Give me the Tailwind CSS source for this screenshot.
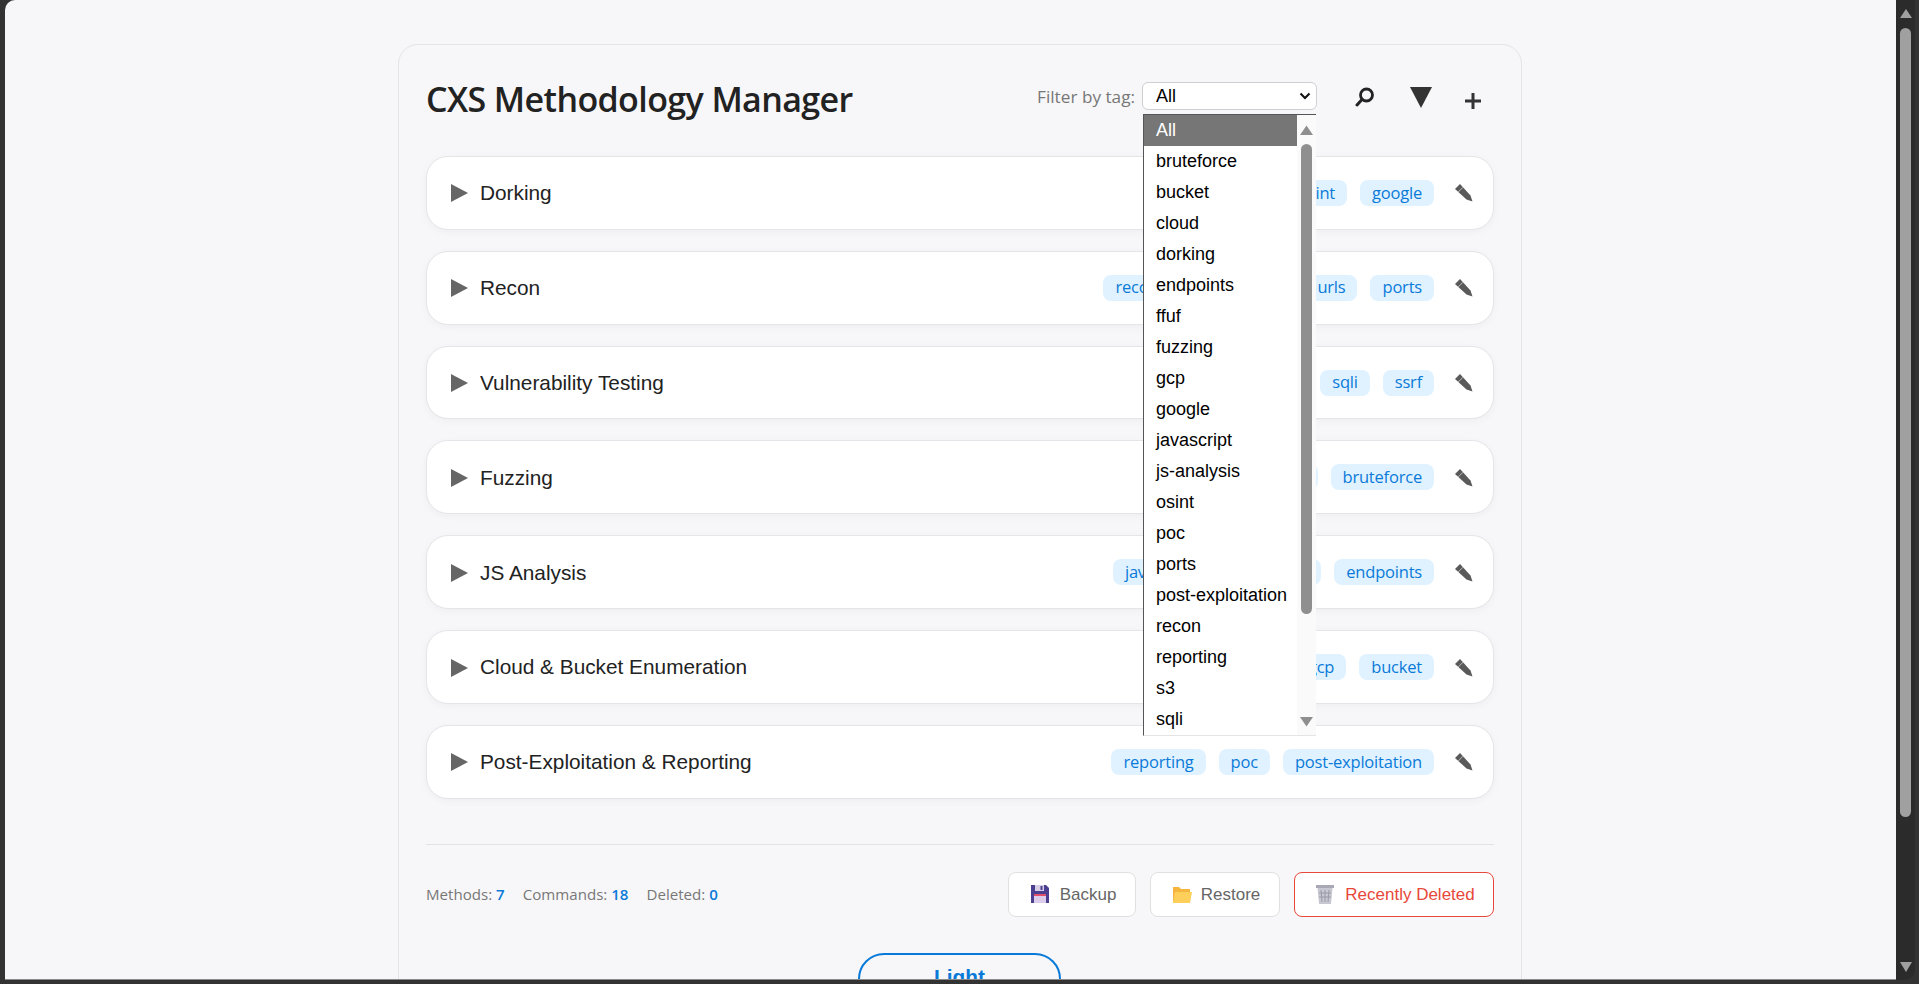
<!DOCTYPE html>
<html lang="en">
<head>
    <meta charset="UTF-8">
    <meta name="viewport" content="width=device-width, initial-scale=1.0">
    <title>CXS Methodology Manager</title>
    <script src="https://cdn.jsdelivr.net/npm/@tailwindcss/browser@4"></script>
</head>
<body class="bg-[#333333] h-screen overflow-hidden flex font-['Liberation_Sans',sans-serif]">

<!-- Page area -->
<div class="ml-[5px] w-[1891px] h-[980px] rounded-tl-[10px] bg-[#f7f7f9] overflow-hidden border-b border-[#8a8a8a]">
    <div class="ml-[393px] mt-[44px] w-[1124px] h-[1100px] bg-[#f7f7f9] border border-[#e2e4e8] rounded-[20px] px-[27px] pt-[28px]">

        <!-- Header -->
        <div class="flex items-center justify-between h-[50px] mb-[33px]">
            <h1 class="font-['Open_Sans',sans-serif] font-semibold text-[34px] tracking-[-0.6px] text-[#222222] mt-[2px]">CXS Methodology Manager</h1>
            <div class="flex items-start h-[50px] mr-[12px]">
                <span class="font-['Open_Sans',sans-serif] text-[#777777] text-[17.2px] mr-[7px] mt-[11px]">Filter by tag:</span>
                <div class="relative mt-[9px]">
                    <div class="w-[175px] h-[28px] bg-white border border-[#cfcfcf] rounded-[6px] flex items-center justify-between pl-[13px] pr-[5px] text-[18px] text-black">
                        <span>All</span>
                        <svg width="12" height="8" viewBox="0 0 12 8"><path d="M1.5 1.5 6 6l4.5-4.5" fill="none" stroke="#111" stroke-width="2"/></svg>
                    </div>

                    <!-- Open dropdown -->
                    <div class="absolute z-10 left-[1px] top-[32px] w-[173px] h-[622px] bg-white border-l border-t border-b border-l-[#555555] border-t-[#555555] border-b-[#e4e4e4] flex text-[18px] text-black overflow-hidden">
                        <div class="w-[153px]">
                            <div class="h-[31px] flex items-center pl-[12px] bg-[#767676] text-white">All</div>
                            <div class="h-[31px] flex items-center pl-[12px]">bruteforce</div>
                            <div class="h-[31px] flex items-center pl-[12px]">bucket</div>
                            <div class="h-[31px] flex items-center pl-[12px]">cloud</div>
                            <div class="h-[31px] flex items-center pl-[12px]">dorking</div>
                            <div class="h-[31px] flex items-center pl-[12px]">endpoints</div>
                            <div class="h-[31px] flex items-center pl-[12px]">ffuf</div>
                            <div class="h-[31px] flex items-center pl-[12px]">fuzzing</div>
                            <div class="h-[31px] flex items-center pl-[12px]">gcp</div>
                            <div class="h-[31px] flex items-center pl-[12px]">google</div>
                            <div class="h-[31px] flex items-center pl-[12px]">javascript</div>
                            <div class="h-[31px] flex items-center pl-[12px]">js-analysis</div>
                            <div class="h-[31px] flex items-center pl-[12px]">osint</div>
                            <div class="h-[31px] flex items-center pl-[12px]">poc</div>
                            <div class="h-[31px] flex items-center pl-[12px]">ports</div>
                            <div class="h-[31px] flex items-center pl-[12px]">post-exploitation</div>
                            <div class="h-[31px] flex items-center pl-[12px]">recon</div>
                            <div class="h-[31px] flex items-center pl-[12px]">reporting</div>
                            <div class="h-[31px] flex items-center pl-[12px]">s3</div>
                            <div class="h-[31px] flex items-center pl-[12px]">sqli</div>
                        </div>
                        <!-- Dropdown scrollbar -->
                        <div class="relative w-[19px] bg-[#fafafa]">
                            <svg class="absolute left-[3px] top-[10px]" width="13" height="10" viewBox="0 0 13 10"><path d="M6.5 0.5 13 10H0z" fill="#8f8f8f"/></svg>
                            <div class="absolute left-[4px] top-[29px] w-[11px] h-[470px] rounded-full bg-[#8f8f8f]"></div>
                            <svg class="absolute left-[3px] top-[602px]" width="13" height="10" viewBox="0 0 13 10"><path d="M0 0h13L6.5 9.5z" fill="#8f8f8f"/></svg>
                        </div>
                    </div>
                </div>

                <!-- Toolbar icons -->
                <button class="ml-[38px] mt-[14px]">
                    <svg width="20" height="20" viewBox="0 0 20 20"><circle cx="11.5" cy="8" r="6" fill="none" stroke="#222" stroke-width="2.8"/><path d="M7 12.5 2 18" stroke="#222" stroke-width="3" stroke-linecap="round"/></svg>
                </button>
                <button class="ml-[34px] mt-[14px]">
                    <svg width="24" height="21" viewBox="0 0 24 21"><path d="M1 0h22L12 21z" fill="#333333"/></svg>
                </button>
                <button class="ml-[31px] mt-[19px]">
                    <svg width="18" height="18" viewBox="0 0 18 18"><path d="M9 1v16M1 9h16" stroke="#333" stroke-width="3"/></svg>
                </button>
            </div>
        </div>

        <!-- Methods -->
        <div class="flex flex-col gap-[21px]">
            <div class="h-[73.84px] bg-white border border-[#e4e5e8] rounded-[22px] shadow-[0_2px_8px_rgba(0,0,0,0.04)] flex items-center pl-[24px] pr-[20px]">
                <svg class="mt-[1px] mr-[1px]" width="17" height="18" viewBox="0 0 17 18"><path d="M0 0l17 9-17 9z" fill="#666666"/></svg>
                <span class="ml-[11px] text-[20.8px] text-[#222222] flex-1">Dorking</span>
                <div class="flex gap-[13px] font-['Open_Sans',sans-serif] text-[16.5px] text-[#0a7ad9] tracking-[-0.2px]">
                    <span class="h-[26px] px-[12px] rounded-[8px] bg-[#e0f2ff] flex items-center">dorking</span>
                    <span class="h-[26px] px-[12px] rounded-[8px] bg-[#e0f2ff] flex items-center">osint</span>
                    <span class="h-[26px] px-[12px] rounded-[8px] bg-[#e0f2ff] flex items-center">google</span>
                </div>
                <svg class="ml-[21px] mt-[1px]" width="18" height="18" viewBox="0 0 18 18"><path d="M0 5 5 0l10.5 11.5 2 6-6-2z" fill="#5a5a5a"/><path d="M3.2 8 8 3.2" stroke="#bbbbbb" stroke-width="1"/></svg>
            </div>
            <div class="h-[73.84px] bg-white border border-[#e4e5e8] rounded-[22px] shadow-[0_2px_8px_rgba(0,0,0,0.04)] flex items-center pl-[24px] pr-[20px]">
                <svg class="mt-[1px] mr-[1px]" width="17" height="18" viewBox="0 0 17 18"><path d="M0 0l17 9-17 9z" fill="#666666"/></svg>
                <span class="ml-[11px] text-[20.8px] text-[#222222] flex-1">Recon</span>
                <div class="flex gap-[13px] font-['Open_Sans',sans-serif] text-[16.5px] text-[#0a7ad9] tracking-[-0.2px]">
                    <span class="h-[26px] px-[12px] rounded-[8px] bg-[#e0f2ff] flex items-center">recon</span>
                    <span class="h-[26px] px-[12px] rounded-[8px] bg-[#e0f2ff] flex items-center">subdomain</span>
                    <span class="h-[26px] px-[12px] rounded-[8px] bg-[#e0f2ff] flex items-center">urls</span>
                    <span class="h-[26px] px-[12px] rounded-[8px] bg-[#e0f2ff] flex items-center">ports</span>
                </div>
                <svg class="ml-[21px] mt-[1px]" width="18" height="18" viewBox="0 0 18 18"><path d="M0 5 5 0l10.5 11.5 2 6-6-2z" fill="#5a5a5a"/><path d="M3.2 8 8 3.2" stroke="#bbbbbb" stroke-width="1"/></svg>
            </div>
            <div class="h-[73.84px] bg-white border border-[#e4e5e8] rounded-[22px] shadow-[0_2px_8px_rgba(0,0,0,0.04)] flex items-center pl-[24px] pr-[20px]">
                <svg class="mt-[1px] mr-[1px]" width="17" height="18" viewBox="0 0 17 18"><path d="M0 0l17 9-17 9z" fill="#666666"/></svg>
                <span class="ml-[11px] text-[20.8px] text-[#222222] flex-1">Vulnerability Testing</span>
                <div class="flex gap-[13px] font-['Open_Sans',sans-serif] text-[16.5px] text-[#0a7ad9] tracking-[-0.2px]">
                    <span class="h-[26px] px-[12px] rounded-[8px] bg-[#e0f2ff] flex items-center">xss</span>
                    <span class="h-[26px] px-[12px] rounded-[8px] bg-[#e0f2ff] flex items-center">sqli</span>
                    <span class="h-[26px] px-[12px] rounded-[8px] bg-[#e0f2ff] flex items-center">ssrf</span>
                </div>
                <svg class="ml-[21px] mt-[1px]" width="18" height="18" viewBox="0 0 18 18"><path d="M0 5 5 0l10.5 11.5 2 6-6-2z" fill="#5a5a5a"/><path d="M3.2 8 8 3.2" stroke="#bbbbbb" stroke-width="1"/></svg>
            </div>
            <div class="h-[73.84px] bg-white border border-[#e4e5e8] rounded-[22px] shadow-[0_2px_8px_rgba(0,0,0,0.04)] flex items-center pl-[24px] pr-[20px]">
                <svg class="mt-[1px] mr-[1px]" width="17" height="18" viewBox="0 0 17 18"><path d="M0 0l17 9-17 9z" fill="#666666"/></svg>
                <span class="ml-[11px] text-[20.8px] text-[#222222] flex-1">Fuzzing</span>
                <div class="flex gap-[13px] font-['Open_Sans',sans-serif] text-[16.5px] text-[#0a7ad9] tracking-[-0.2px]">
                    <span class="h-[26px] px-[12px] rounded-[8px] bg-[#e0f2ff] flex items-center">ffuf</span>
                    <span class="h-[26px] px-[12px] rounded-[8px] bg-[#e0f2ff] flex items-center">fuzzing</span>
                    <span class="h-[26px] px-[12px] rounded-[8px] bg-[#e0f2ff] flex items-center">bruteforce</span>
                </div>
                <svg class="ml-[21px] mt-[1px]" width="18" height="18" viewBox="0 0 18 18"><path d="M0 5 5 0l10.5 11.5 2 6-6-2z" fill="#5a5a5a"/><path d="M3.2 8 8 3.2" stroke="#bbbbbb" stroke-width="1"/></svg>
            </div>
            <div class="h-[73.84px] bg-white border border-[#e4e5e8] rounded-[22px] shadow-[0_2px_8px_rgba(0,0,0,0.04)] flex items-center pl-[24px] pr-[20px]">
                <svg class="mt-[1px] mr-[1px]" width="17" height="18" viewBox="0 0 17 18"><path d="M0 0l17 9-17 9z" fill="#666666"/></svg>
                <span class="ml-[11px] text-[20.8px] text-[#222222] flex-1">JS Analysis</span>
                <div class="flex gap-[13px] font-['Open_Sans',sans-serif] text-[16.5px] text-[#0a7ad9] tracking-[-0.2px]">
                    <span class="h-[26px] px-[12px] rounded-[8px] bg-[#e0f2ff] flex items-center">javascript</span>
                    <span class="h-[26px] px-[12px] rounded-[8px] bg-[#e0f2ff] flex items-center">js-analysis</span>
                    <span class="h-[26px] px-[12px] rounded-[8px] bg-[#e0f2ff] flex items-center">endpoints</span>
                </div>
                <svg class="ml-[21px] mt-[1px]" width="18" height="18" viewBox="0 0 18 18"><path d="M0 5 5 0l10.5 11.5 2 6-6-2z" fill="#5a5a5a"/><path d="M3.2 8 8 3.2" stroke="#bbbbbb" stroke-width="1"/></svg>
            </div>
            <div class="h-[73.84px] bg-white border border-[#e4e5e8] rounded-[22px] shadow-[0_2px_8px_rgba(0,0,0,0.04)] flex items-center pl-[24px] pr-[20px]">
                <svg class="mt-[1px] mr-[1px]" width="17" height="18" viewBox="0 0 17 18"><path d="M0 0l17 9-17 9z" fill="#666666"/></svg>
                <span class="ml-[11px] text-[20.8px] text-[#222222] flex-1">Cloud &amp; Bucket Enumeration</span>
                <div class="flex gap-[13px] font-['Open_Sans',sans-serif] text-[16.5px] text-[#0a7ad9] tracking-[-0.2px]">
                    <span class="h-[26px] px-[12px] rounded-[8px] bg-[#e0f2ff] flex items-center">cloud</span>
                    <span class="h-[26px] px-[12px] rounded-[8px] bg-[#e0f2ff] flex items-center">s3</span>
                    <span class="h-[26px] px-[12px] rounded-[8px] bg-[#e0f2ff] flex items-center">gcp</span>
                    <span class="h-[26px] px-[12px] rounded-[8px] bg-[#e0f2ff] flex items-center">bucket</span>
                </div>
                <svg class="ml-[21px] mt-[1px]" width="18" height="18" viewBox="0 0 18 18"><path d="M0 5 5 0l10.5 11.5 2 6-6-2z" fill="#5a5a5a"/><path d="M3.2 8 8 3.2" stroke="#bbbbbb" stroke-width="1"/></svg>
            </div>
            <div class="h-[73.84px] bg-white border border-[#e4e5e8] rounded-[22px] shadow-[0_2px_8px_rgba(0,0,0,0.04)] flex items-center pl-[24px] pr-[20px]">
                <svg class="mt-[1px] mr-[1px]" width="17" height="18" viewBox="0 0 17 18"><path d="M0 0l17 9-17 9z" fill="#666666"/></svg>
                <span class="ml-[11px] text-[20.8px] text-[#222222] flex-1">Post-Exploitation &amp; Reporting</span>
                <div class="flex gap-[13px] font-['Open_Sans',sans-serif] text-[16.5px] text-[#0a7ad9] tracking-[-0.2px]">
                    <span class="h-[26px] px-[12px] rounded-[8px] bg-[#e0f2ff] flex items-center">reporting</span>
                    <span class="h-[26px] px-[12px] rounded-[8px] bg-[#e0f2ff] flex items-center">poc</span>
                    <span class="h-[26px] px-[12px] rounded-[8px] bg-[#e0f2ff] flex items-center">post-exploitation</span>
                </div>
                <svg class="ml-[21px] mt-[1px]" width="18" height="18" viewBox="0 0 18 18"><path d="M0 5 5 0l10.5 11.5 2 6-6-2z" fill="#5a5a5a"/><path d="M3.2 8 8 3.2" stroke="#bbbbbb" stroke-width="1"/></svg>
            </div>
        </div>

        <!-- Footer -->
        <div class="mt-[45px] border-t border-[#e2e3e7] pt-[27px] flex items-center justify-between">
            <div class="flex gap-[18px] font-['Open_Sans',sans-serif] text-[15.1px] text-[#777777]">
                <span>Methods: <b class="font-semibold text-[#0a7ad9]">7</b></span>
                <span>Commands: <b class="font-semibold text-[#0a7ad9]">18</b></span>
                <span>Deleted: <b class="font-semibold text-[#0a7ad9]">0</b></span>
            </div>
            <div class="flex gap-[14px] text-[17px]">
                <button class="w-[128px] h-[45px] bg-white border border-[#e0e0e0] rounded-[8px] text-[#666666] flex items-center justify-center gap-[10px] pl-[2px]">
                    <svg width="20" height="20" viewBox="0 0 20 20"><path d="M1 1h15l3 3v15H1z" fill="#4b3f8f"/><path d="M5 1h9v6H5z" fill="#d8cfe6"/><path d="M10.5 2h2v4h-2z" fill="#4b3f8f"/><path d="M4 10h12v9H4z" fill="#dccdea"/><path d="M4 10h12v2H4z" fill="#e0506a"/></svg>
                    Backup
                </button>
                <button class="w-[130px] h-[45px] bg-white border border-[#e0e0e0] rounded-[8px] text-[#666666] flex items-center justify-center gap-[9px] pl-[2px]">
                    <svg width="20" height="20" viewBox="0 0 20 20"><path d="M1 3h6l2 2h9v13H1z" fill="#f5b53f"/><path d="M3 8h17l-2 11H1z" fill="#ffcf5c"/></svg>
                    Restore
                </button>
                <button class="w-[200px] h-[45px] bg-white border border-[#e8483a] rounded-[8px] text-[#e8483a] flex items-center justify-center gap-[10px] pl-[2px]">
                    <svg width="20" height="20" viewBox="0 0 20 20"><path d="M1 1h18v3H1z" fill="#a9a9b5"/><path d="M2.5 4h15l-1.5 16H4z" fill="#c8c8d2"/><path d="M6 6l1 12M10 6v12M14 6l-1 12M4 9h12M4 13h12" stroke="#9a9aa8" stroke-width="1"/></svg>
                    Recently Deleted
                </button>
            </div>
        </div>

        <!-- Theme toggle -->
        <div class="flex justify-center mt-[36px] -ml-[1px]">
            <button class="w-[203px] h-[60px] border-2 border-[#0a7ad9] rounded-[26px] text-[#0a7ad9] font-bold text-[20.8px] flex justify-center pt-[6px]">Light</button>
        </div>
    </div>
</div>

<!-- Window scrollbar -->
<div class="relative w-[19px] h-[980px] bg-[#2b2b2b] rounded-br-[10px]">
    <svg class="absolute left-[4px] top-[9px]" width="12" height="9" viewBox="0 0 12 9"><path d="M6 0l6 9H0z" fill="#a0a0a0"/></svg>
    <div class="absolute left-[4px] top-[28px] w-[11px] h-[789px] rounded-full bg-[#a0a0a0]"></div>
    <svg class="absolute left-[4px] top-[962px]" width="12" height="10" viewBox="0 0 12 10"><path d="M0 0h12L6 10z" fill="#a0a0a0"/></svg>
</div>

</body>
</html>
